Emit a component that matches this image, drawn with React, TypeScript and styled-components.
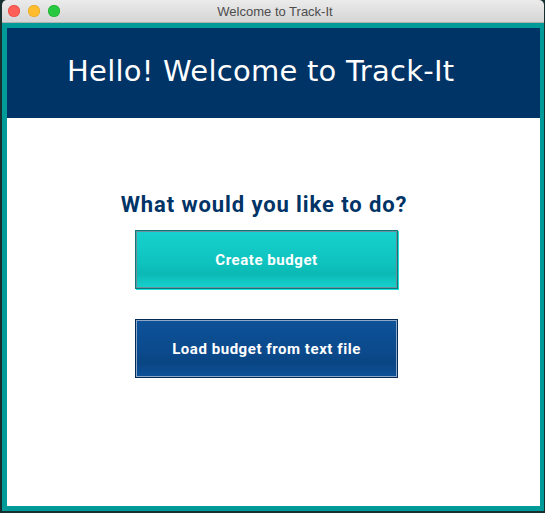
import React from "react";
import styled, { createGlobalStyle } from "styled-components";

const color = {
  desktop: "#17302f",
  teal: "#009a98",
  navy: "#003366",
  white: "#ffffff",
};

const GlobalStyle = createGlobalStyle`
  html, body {
    margin: 0;
    padding: 0;
    background: ${color.desktop};
    width: 545px;
    height: 513px;
    overflow: hidden;
  }
`;

const App = () => {
  return (
    <>
      <GlobalStyle />
      <Window>
        <TitleBar>
          <Lights>
            <Light tint="#fe5f57" edge="#e0443e" />
            <Light tint="#febc2e" edge="#dea123" />
            <Light tint="#28c840" edge="#1aab29" />
          </Lights>
          <WindowTitle>Welcome to Track-It</WindowTitle>
        </TitleBar>
        <Frame>
          <Header>
            <Greeting>Hello! Welcome to Track-It</Greeting>
          </Header>
          <Content>
            <Question>What would you like to do?</Question>
            <Actions>
              <ActionButton variant="create">Create budget</ActionButton>
              <ActionButton variant="load">Load budget from text file</ActionButton>
            </Actions>
          </Content>
        </Frame>
      </Window>
    </>
  );
};

export default App;

const Window = styled.div`
  display: flex;
  flex-direction: column;
  width: 542px;
  height: 511px;
  margin-left: 2px;
  border-radius: 5px 5px 0 0;
  overflow: hidden;
`;

const TitleBar = styled.div`
  position: relative;
  display: flex;
  align-items: center;
  justify-content: center;
  height: 22px;
  flex-shrink: 0;
  background: linear-gradient(#ebebeb, #d5d5d5);
  border-bottom: 1px solid #b1b1b1;
`;

const Lights = styled.div`
  position: absolute;
  left: 6px;
  top: 5px;
  display: flex;
  gap: 8px;
`;

const Light = styled.span<{ tint: string; edge: string }>`
  width: 12px;
  height: 12px;
  border-radius: 50%;
  background: ${(p) => p.tint};
  box-shadow: inset 0 0 0 0.5px ${(p) => p.edge};
`;

const WindowTitle = styled.span`
  font-family: "Liberation Sans", Arial, sans-serif;
  font-size: 13px;
  color: #4d4d4d;
  margin-left: 4px;
`;

const Frame = styled.div`
  flex: 1;
  display: flex;
  flex-direction: column;
  background: ${color.teal};
  padding: 5px 4px 5px 5px;
`;

const Header = styled.div`
  display: flex;
  align-items: center;
  height: 90px;
  flex-shrink: 0;
  padding-left: 60px;
  background: ${color.navy};
`;

const Greeting = styled.h1`
  margin: 0 0 4px;
  font-family: "DejaVu Sans", "Open Sans", sans-serif;
  font-weight: normal;
  font-size: 29px;
  letter-spacing: 0.25px;
  color: ${color.white};
`;

const Content = styled.div`
  flex: 1;
  display: flex;
  flex-direction: column;
  align-items: center;
  padding: 74px 14px 0 0;
  background: ${color.white};
`;

const Question = styled.h2`
  margin: 0 5px 0 0;
  font-family: Roboto, "Noto Sans", sans-serif;
  font-weight: bold;
  font-size: 22px;
  letter-spacing: 0.9px;
  color: ${color.navy};
`;

const Actions = styled.div`
  display: flex;
  flex-direction: column;
  gap: 30px;
  margin-top: 13px;
`;

const ActionButton = styled.button<{ variant: "create" | "load" }>`
  width: 263px;
  height: 59px;
  border-radius: 0;
  font-family: Roboto, "Noto Sans", sans-serif;
  font-weight: bold;
  font-size: 15px;
  letter-spacing: 0.55px;
  color: ${color.white};
  cursor: pointer;
  border: 1px solid ${(p) => (p.variant === "create" ? "#0a7b7b" : "#022a55")};
  background: ${(p) =>
    p.variant === "create"
      ? "linear-gradient(#16d2ce, #0fc3bf 55%, #0cb9b4 75%, #16d2ce)"
      : "linear-gradient(#0e5299, #0b4a8c 55%, #094583 75%, #0e5299)"};
  box-shadow: inset 0 0 0 1px
      ${(p) => (p.variant === "create" ? "#6d8f9c" : "#8fa8c8")},
    ${(p) => (p.variant === "create" ? "1px 1px 0 #18e0dc" : "0 0 0 transparent")};
`;
